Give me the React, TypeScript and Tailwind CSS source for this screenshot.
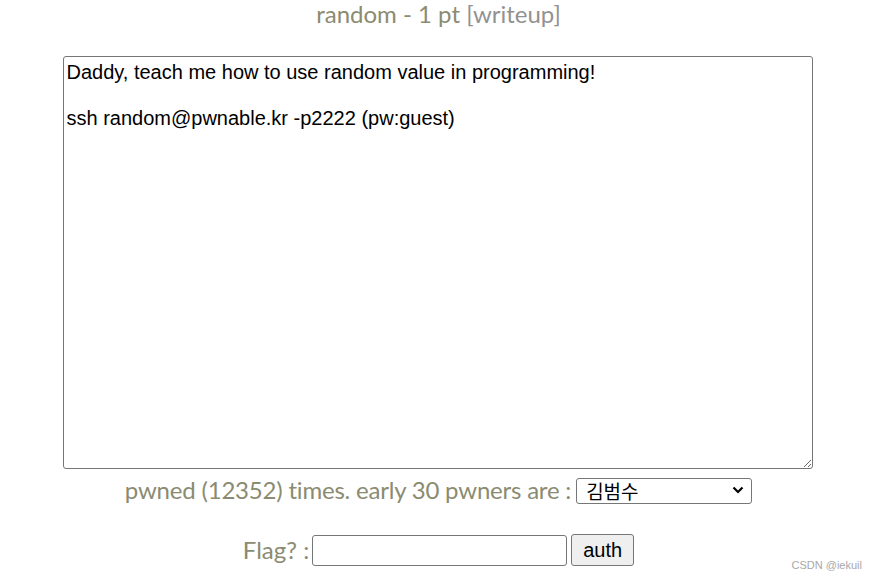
import React from 'react';

const description = `Daddy, teach me how to use random value in programming!

ssh random@pwnable.kr -p2222 (pw:guest)`;

const App: React.FC = () => {
  return (
    <div className="relative w-full min-h-[580px] bg-white font-['Lato',sans-serif] text-[#8b8b72]">
      <div className="flex flex-col items-center">
        {/* Title */}
        <h1 className="text-[24px] leading-[27px] font-normal">
          random - 1 pt <span className="text-[#929292]">[writeup]</span>
        </h1>

        {/* Challenge description */}
        <textarea
          readOnly
          defaultValue={description}
          className="mt-[29px] -translate-x-[1px] w-[750px] h-[413px] border border-[#767676] rounded-[3px] px-[3px] pt-[4px] pb-[2px] font-['Liberation_Sans',Arial,sans-serif] text-[20px] leading-[23px] text-black bg-white outline-none"
        />

        {/* Pwners */}
        <div className="mt-[8px] flex items-center text-[24px] leading-[26px] tracking-[-0.2px]">
          <span className="-translate-y-[1px]">pwned (12352) times. early 30 pwners are :</span>
          <div className="relative ml-[5px]">
            <select className="appearance-none w-[176px] h-[26px] border border-[#767676] rounded-[3px] bg-white pl-[9px] text-[19px] leading-[22px] tracking-normal text-black font-['Noto_Sans_CJK_KR','Liberation_Sans',sans-serif] outline-none">
              <option>김범수</option>
            </select>
            <svg
              className="pointer-events-none absolute right-[8px] top-[8px] w-[12px] h-[10px]"
              viewBox="0 0 12 10"
              fill="none"
              stroke="black"
              strokeWidth="2.2"
            >
              <path d="M1.5 2.5 L6 7 L10.5 2.5" />
            </svg>
          </div>
        </div>

        {/* Flag form */}
        <div className="mt-[30px] flex items-center text-[24px] leading-[26px]">
          <span>Flag? :</span>
          <input
            type="text"
            className="ml-[3px] w-[255px] h-[31px] border border-[#767676] rounded-[3px] bg-white px-[3px] text-[16px] text-black outline-none"
          />
          <button className="ml-[4px] w-[63px] h-[32px] border border-[#767676] rounded-[3px] bg-[#efefef] text-[20px] leading-[24px] text-black font-['Liberation_Sans',Arial,sans-serif]">
            auth
          </button>
        </div>
      </div>

      {/* watermark */}
      <div className="absolute right-[15px] bottom-[9px] text-[11px] leading-[12px] text-[#a8a8a8] font-['Liberation_Sans',Arial,sans-serif]">
        CSDN @iekuil
      </div>
    </div>
  );
};

export default App;
